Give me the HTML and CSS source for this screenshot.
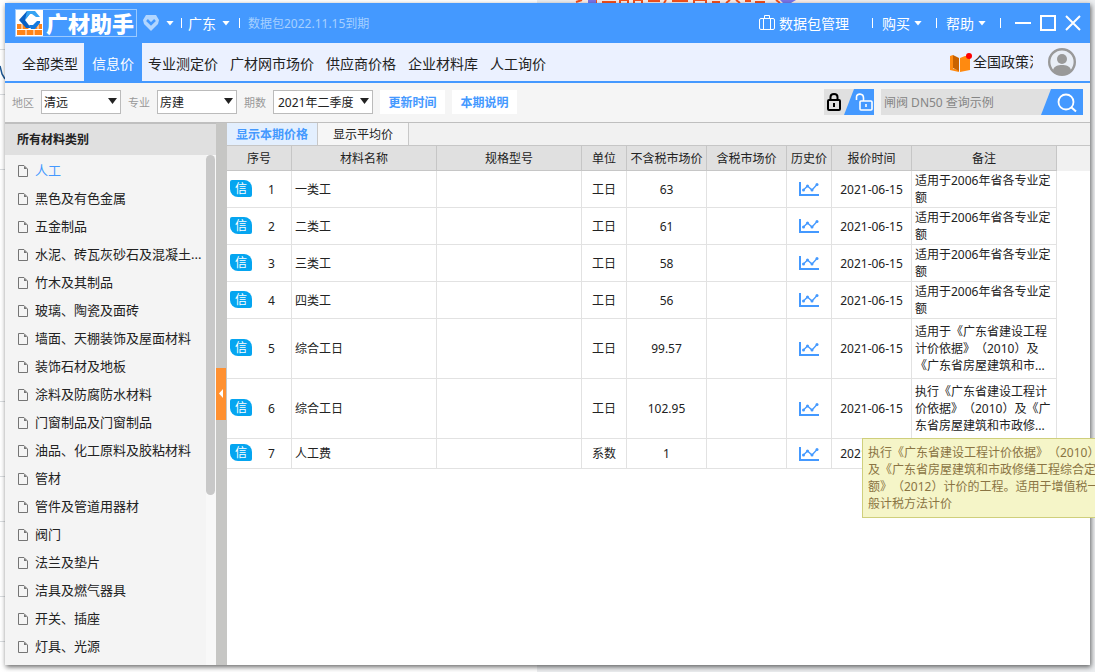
FILE: index.html
```html
<!DOCTYPE html>
<html lang="zh-CN">
<head>
<meta charset="utf-8">
<title>广材助手</title>
<link rel="stylesheet" href="styles.css">
</head>
<body>
<svg class="sprite" aria-hidden="true">
  <symbol id="doc" viewBox="0 0 10 12"><path d="M.5.5h5.500l3.500 3.500v7.500h-9z" fill="none" stroke="#757575"/><path d="M6 1v3h3z" fill="#757575"/></symbol>
  <symbol id="chart" viewBox="0 0 20 14"><path d="M1 0v13h19" fill="none" stroke="#4499ff" stroke-width="2"/><path d="M4.500 8l4-4 4.500 4 5-5.500" fill="none" stroke="#4499ff" stroke-width="1.300"/><g fill="#4499ff"><circle cx="4.500" cy="8" r="1.500"/><circle cx="8.500" cy="4" r="1.500"/><circle cx="13" cy="8" r="1.500"/><circle cx="18" cy="2.500" r="1.500"/></g></symbol>
</svg>
<svg class="backdrop" width="1095" height="672" aria-hidden="true">
  <path d="M570 0h250v3H570z" fill="#fbeee9"/>
  <path d="M576 2l6-2M596 3V0M602 2h14M620 3V0h8v3M634 3V0h8v3M648 1h12M664 3l2-3M672 1h16M694 3V0h12v3M712 2h8M726 3l4-3M736 0l4 3M745 1h6M755 2h10M776 0l4 3" stroke="#f4511e" stroke-width="2" fill="none"/>
  <path d="M588 0h8v3h-8zM780 0h16l-5 3h-8z" fill="#7b74e8"/>
  <path d="M0 49.500h5M0 94.500h5M0 169.500h5M0 401.500h5M0 476.500h5M0 521.500h5M0 596.500h5M0 641.500h5" stroke="#d9dcdf"/>
  <path d="M0 66l2 8 3 5" stroke="#1d5795" stroke-width="1.500" fill="none"/>
</svg>
<div class="window">
  <header class="titlebar">
    <div class="brand">
      <svg width="28" height="28" viewBox="0 0 28 28"><path fill="#fff" d="M0 0h28v28H0z"/><path d="M2 15h7l5 5h5l3-5h5v11H2z" fill="#ff8418"/><path d="M2 20.500h25M7 15v5M11 21v5M19 21v5M23 15v5" stroke="#fff" fill="none"/><path d="M4 11L12 2h5l-7 9 6 8h-5z" fill="#0a5fc4"/><path d="M12 2h8l5 6h-4l-4-3h-2l-5 6z" fill="#35a3f3"/><path d="M14 16h4l4-4h3v2l-5 6h-4z" fill="#1279df"/></svg>
      <span class="brand-name">广材助手</span>
    </div>
    <button class="bare badge-menu" aria-label="会员">
      <svg width="16" height="16" viewBox="0 0 16 16"><path d="M3 0h10l3 5-1 4-7 7-7-7-1-4z" fill="#b2d6ff"/><path d="M4 5l4 4 4-4" stroke="#4499ff" stroke-width="2.500" fill="none"/></svg>
      <i class="caret"></i>
    </button>
    <i class="sep"></i>
    <button class="bare region">广东<i class="caret"></i></button>
    <i class="sep"></i>
    <span class="expiry">数据包2022.11.15到期</span>
    <div class="title-right">
      <button class="bare package"><svg width="16" height="16" viewBox="0 0 16 16" fill="none" stroke="#fff"><rect x=".5" y="3.500" width="15" height="11" rx="1.500"/><path d="M5.500 3V.5h5V3M4.500 4v10M11.500 4v10"/></svg>数据包管理</button>
      <i class="sep"></i>
      <button class="bare drop">购买<i class="caret"></i></button>
      <i class="sep"></i>
      <button class="bare drop">帮助<i class="caret"></i></button>
      <i class="sep"></i>
      <div class="controls">
        <button class="bare" aria-label="最小化"><svg width="16" height="16"><path d="M0 8h16" stroke="#fff" stroke-width="2"/></svg></button>
        <button class="bare" aria-label="最大化"><svg width="16" height="16"><path d="M1 1h14v14H1z" stroke="#fff" stroke-width="2" fill="none"/></svg></button>
        <button class="bare" aria-label="关闭"><svg width="16" height="16"><path d="M1 1l14 14M15 1L1 15" stroke="#fff" stroke-width="2"/></svg></button>
      </div>
    </div>
  </header>

  <nav class="mainnav">
    <a href="#all">全部类型</a>
    <a href="#info" class="active" aria-current="page">信息价</a>
    <a href="#pro">专业测定价</a>
    <a href="#market">广材网市场价</a>
    <a href="#supplier">供应商价格</a>
    <a href="#company">企业材料库</a>
    <a href="#labour">人工询价</a>
    <div class="nav-right">
      <a class="policy" href="#policy">
        <svg width="24" height="21" viewBox="0 0 24 21"><path d="M1 4l3-1v15l-3-1z" fill="#ff8a10"/><path d="M1 16l9 2v2l-9-2z" fill="#ff8a10"/><path d="M4 3l6 3v13l-6-3z" fill="#c96200"/><path d="M11 6l5-2h5v14l-5 1-5 1z" fill="#ff8a10"/><circle cx="20" cy="4" r="3" fill="#f00"/></svg>
        <span class="policy-text">全国政策法规</span>
      </a>
      <button class="bare avatar" aria-label="用户"><svg width="28" height="28" viewBox="0 0 28 28"><circle cx="14" cy="14" r="12.800" fill="#e9eef6" stroke="#999" stroke-width="2.400"/><circle cx="14" cy="11" r="5" fill="#999"/><path d="M5 22c1-4 5-5 9-5s8 1 9 5c-2 3-5 4.500-9 4.500S7 25 5 22z" fill="#999"/></svg></button>
    </div>
  </nav>

  <form class="filters">
    <label for="area">地区</label>
    <span class="pick"><select id="area"><option>清远</option></select></span>
    <label for="major">专业</label>
    <span class="pick"><select id="major"><option>房建</option></select></span>
    <label for="period">期数</label>
    <span class="pick wide"><select id="period"><option>2021年二季度</option></select></span>
    <button type="button" class="flat">更新时间</button>
    <button type="button" class="flat">本期说明</button>
    <div class="search-side">
      <button type="button" class="bare lock" aria-label="锁定"><svg width="50" height="26" viewBox="0 0 50 26"><path d="M0 0h50v26H0z" fill="#e0e0e0"/><path d="M30 0h20v26H20z" fill="#4499ff"/><g fill="none" stroke="#000" stroke-width="2"><rect x="4" y="11" width="12" height="10" rx="1"/><path d="M6.500 11V8c0-4 7-4 7 0v3"/></g><path d="M10 14v4" stroke="#000" stroke-width="2"/><g fill="none" stroke="#fff" stroke-width="1.600"><rect x="36" y="12" width="12" height="9" rx="1"/><path d="M39.500 12V9c0-5-7-5-7-1v3"/><path d="M42 15v3"/></g></svg></button>
      <div class="search">
        <input type="search" aria-label="查询" placeholder="闸阀 DN50 查询示例">
        <button type="button" class="bare" aria-label="搜索"><svg width="42" height="26" viewBox="0 0 42 26"><path d="M10 0h32v26H0z" fill="#4499ff"/><circle cx="25" cy="13" r="7.500" fill="none" stroke="#fff" stroke-width="1.800"/><path d="M30 18l5 4.500" stroke="#fff" stroke-width="2"/></svg></button>
      </div>
    </div>
  </form>

  <div class="main">
    <aside class="sidebar">
      <h2>所有材料类别</h2>
      <div class="tree">
        <ul>
          <li><a href="#c1" class="current"><svg><use href="#doc"/></svg><span>人工</span></a></li>
          <li><a href="#c2"><svg><use href="#doc"/></svg><span>黑色及有色金属</span></a></li>
          <li><a href="#c3"><svg><use href="#doc"/></svg><span>五金制品</span></a></li>
          <li><a href="#c4"><svg><use href="#doc"/></svg><span>水泥、砖瓦灰砂石及混凝土...</span></a></li>
          <li><a href="#c5"><svg><use href="#doc"/></svg><span>竹木及其制品</span></a></li>
          <li><a href="#c6"><svg><use href="#doc"/></svg><span>玻璃、陶瓷及面砖</span></a></li>
          <li><a href="#c7"><svg><use href="#doc"/></svg><span>墙面、天棚装饰及屋面材料</span></a></li>
          <li><a href="#c8"><svg><use href="#doc"/></svg><span>装饰石材及地板</span></a></li>
          <li><a href="#c9"><svg><use href="#doc"/></svg><span>涂料及防腐防水材料</span></a></li>
          <li><a href="#c10"><svg><use href="#doc"/></svg><span>门窗制品及门窗制品</span></a></li>
          <li><a href="#c11"><svg><use href="#doc"/></svg><span>油品、化工原料及胶粘材料</span></a></li>
          <li><a href="#c12"><svg><use href="#doc"/></svg><span>管材</span></a></li>
          <li><a href="#c13"><svg><use href="#doc"/></svg><span>管件及管道用器材</span></a></li>
          <li><a href="#c14"><svg><use href="#doc"/></svg><span>阀门</span></a></li>
          <li><a href="#c15"><svg><use href="#doc"/></svg><span>法兰及垫片</span></a></li>
          <li><a href="#c16"><svg><use href="#doc"/></svg><span>洁具及燃气器具</span></a></li>
          <li><a href="#c17"><svg><use href="#doc"/></svg><span>开关、插座</span></a></li>
          <li><a href="#c18"><svg><use href="#doc"/></svg><span>灯具、光源</span></a></li>
        </ul>
        <div class="track"><div class="thumb"></div></div>
      </div>
    </aside>
    <div class="splitter"><button class="bare" aria-label="收起"><svg width="10" height="52"><path d="M7 21v9l-4-4.500z" fill="#fff"/></svg></button></div>

    <section class="content">
      <div class="subtabs">
        <button class="on">显示本期价格</button>
        <button>显示平均价</button>
      </div>
      <table>
        <colgroup><col class="w65"><col class="w145"><col class="w145"><col class="w45"><col class="w80"><col class="w80"><col class="w45"><col class="w80"><col class="w145"><col></colgroup>
        <thead><tr><th>序号</th><th>材料名称</th><th>规格型号</th><th>单位</th><th>不含税市场价</th><th>含税市场价</th><th>历史价</th><th>报价时间</th><th>备注</th><td class="rest"></td></tr></thead>
        <tbody>
          <tr><td class="no"><div><b>信</b><span>1</span></div></td><td class="name">一类工</td><td></td><td>工日</td><td>63</td><td></td><td><button class="bare" aria-label="历史价"><svg class="chart"><use href="#chart"/></svg></button></td><td>2021-06-15</td><td class="note">适用于2006年省各专业定额</td></tr>
          <tr><td class="no"><div><b>信</b><span>2</span></div></td><td class="name">二类工</td><td></td><td>工日</td><td>61</td><td></td><td><button class="bare" aria-label="历史价"><svg class="chart"><use href="#chart"/></svg></button></td><td>2021-06-15</td><td class="note">适用于2006年省各专业定额</td></tr>
          <tr><td class="no"><div><b>信</b><span>3</span></div></td><td class="name">三类工</td><td></td><td>工日</td><td>58</td><td></td><td><button class="bare" aria-label="历史价"><svg class="chart"><use href="#chart"/></svg></button></td><td>2021-06-15</td><td class="note">适用于2006年省各专业定额</td></tr>
          <tr><td class="no"><div><b>信</b><span>4</span></div></td><td class="name">四类工</td><td></td><td>工日</td><td>56</td><td></td><td><button class="bare" aria-label="历史价"><svg class="chart"><use href="#chart"/></svg></button></td><td>2021-06-15</td><td class="note">适用于2006年省各专业定额</td></tr>
          <tr class="tall"><td class="no"><div><b>信</b><span>5</span></div></td><td class="name">综合工日</td><td></td><td>工日</td><td>99.57</td><td></td><td><button class="bare" aria-label="历史价"><svg class="chart"><use href="#chart"/></svg></button></td><td>2021-06-15</td><td class="note">适用于《广东省建设工程计价依据》（2010）及《广东省房屋建筑和市...</td></tr>
          <tr class="tall"><td class="no"><div><b>信</b><span>6</span></div></td><td class="name">综合工日</td><td></td><td>工日</td><td>102.95</td><td></td><td><button class="bare" aria-label="历史价"><svg class="chart"><use href="#chart"/></svg></button></td><td>2021-06-15</td><td class="note">执行《广东省建设工程计价依据》（2010）及《广东省房屋建筑和市政修...<div class="tip" role="tooltip">执行《广东省建设工程计价依据》（2010）<br>及《广东省房屋建筑和市政修缮工程综合定<br>额》（2012）计价的工程。适用于增值税一<br>般计税方法计价</div></td></tr>
          <tr class="short"><td class="no"><div><b>信</b><span>7</span></div></td><td class="name">人工费</td><td></td><td>系数</td><td>1</td><td></td><td><button class="bare" aria-label="历史价"><svg class="chart"><use href="#chart"/></svg></button></td><td>2021-06-15</td><td class="note"></td></tr>
        </tbody>
      </table>
    </section>
  </div>
</div>
</body>
</html>
```
FILE: styles.css
```css
* { box-sizing: border-box; }
body {
  margin: 0;
  min-height: 100vh;
  display: flex;
  padding: 3px 5px 7px;
  overflow-x: clip;
  background: linear-gradient(90deg, #fff 537px, #eceef0 537px);
  font: 12px/17px "Noto Sans", "Noto Sans CJK SC", sans-serif;
  color: #222;
  text-spacing-trim: space-all;
}
button, input, select { font: inherit; color: inherit; }
a { color: inherit; text-decoration: none; }
svg { display: block; flex: none; }
.sprite { position: absolute; width: 0; height: 0; }
.backdrop { position: absolute; left: 0; top: 0; }
.bare {
  display: flex;
  align-items: center;
  padding: 0;
  border: 0;
  background: none;
}
.window {
  position: relative;
  flex: 1;
  min-width: 0;
  display: flex;
  flex-direction: column;
  background: #fff;
  box-shadow: 1px 2px 5px rgba(0, 0, 0, .6);
}

/* title bar */
.titlebar {
  display: flex;
  align-items: center;
  height: 40px;
  padding: 0 9px 0 10px;
  background: #4499ff;
  color: #fff;
  font-size: 14px;
}
.brand {
  display: flex;
  align-items: center;
  width: 122px;
  height: 28px;
  margin-right: 6px;
  outline: 1px solid #9bcaff;
  outline-offset: -1px;
}
.brand-name { margin-left: 3px; font-size: 22px; font-weight: 900; line-height: 26px; white-space: nowrap; }
.badge-menu { gap: 7px; margin-right: 7px; }
.caret {
  width: 8px;
  height: 5px;
  background: #fff;
  clip-path: polygon(0 0, 100% 0, 50% 100%);
}
.sep { width: 1px; height: 10px; background: #fff; }
.region { gap: 6px; margin: 0 9px 0 6px; }
.expiry { margin-left: 8px; font-size: 12px; color: #a6d0ff; }
.title-right { display: flex; align-items: center; margin-left: auto; }
.package { gap: 4px; margin-right: 23px; }
.drop { gap: 4px; margin: 0 14px 0 9px; }
.controls { display: flex; gap: 9px; margin-left: 14px; }

/* main navigation */
.mainnav {
  display: flex;
  height: 40px;
  padding: 0 14px 0 11px;
  border-bottom: 2px solid #4499ff;
  background: #ebf1ff;
  font-size: 14px;
  line-height: 38px;
}
.mainnav > a { padding: 2px 6px 0; white-space: nowrap; }
.mainnav > .active { padding: 2px 8px 0; background: #4499ff; color: #fff; }
.nav-right { display: flex; align-items: center; gap: 15px; margin-left: auto; }
.policy { display: flex; align-items: center; }
.policy-text { width: 60px; overflow: hidden; white-space: nowrap; }

/* filters */
.filters {
  display: flex;
  align-items: center;
  height: 40px;
  padding: 0 7px;
  border-bottom: 1px solid #bfbfbf;
  background: #f5f5f5;
}
.filters label { margin-right: 7px; font-size: 11px; color: #999; }
.pick { position: relative; width: 80px; margin-right: 7px; }
.pick select {
  appearance: none;
  display: block;
  width: 100%;
  height: 24px;
  padding: 0 2px;
  border: 1px solid #bbb;
  border-radius: 0;
  background: #fff;
}
.pick.wide { width: 100px; }
.pick.wide select { padding: 0 4px; }
.pick::after {
  content: "";
  position: absolute;
  right: 4px;
  top: 8px;
  width: 9px;
  height: 6px;
  background: #222;
  clip-path: polygon(0 0, 100% 0, 50% 100%);
  pointer-events: none;
}
.flat {
  height: 24px;
  width: 65px;
  margin-right: 7px;
  padding: 0;
  border: 0;
  background: #fff;
  color: #4499ff;
  font-weight: 600;
}
.search-side { display: flex; gap: 7px; margin-left: auto; }
.search { display: flex; width: 202px; background: #e0e0e0; }
.search input {
  flex: 1;
  min-width: 0;
  height: 26px;
  padding: 0 3px;
  border: 0;
  background: none;
  appearance: none;
}
.search input::placeholder { color: #858585; }
.filters > * { margin-bottom: 1px; }

/* sidebar */
.main { flex: 1; display: flex; }
.sidebar { width: 211px; display: flex; flex-direction: column; background: #f4f4f4; }
.sidebar h2 {
  margin: 0;
  height: 32px;
  padding: 0 12px;
  border-top: 1px solid #bfbfbf;
  background: #e0e0e0;
  font-size: 12px;
  font-weight: 600;
  line-height: 31px;
}
.tree { flex: 1; display: flex; }
.tree ul { flex: 1; min-width: 0; margin: 0; padding: 1px 0 0; list-style: none; }
.tree a {
  display: flex;
  align-items: center;
  gap: 7px;
  height: 28px;
  padding-left: 13px;
  font-size: 13px;
  white-space: nowrap;
}
.tree svg { width: 10px; height: 12px; margin-top: 2px; }
.tree .current { color: #4499ff; }
.track { width: 10px; background: #f8f8f8; }
.thumb { width: 9px; height: 340px; border-radius: 5px; background: #c8c8c8; }
.splitter { display: flex; align-items: center; width: 11px; background: #c6c6c4; }
.splitter button { background: #ff9030; }

/* price table */
.content { flex: 1; min-width: 0; }
.subtabs { display: flex; height: 22px; background: #f1f1f1; }
.subtabs button {
  width: 91px;
  padding: 0;
  border: 0;
  border-right: 1px solid #c8c8c8;
  background: #f6f6f6;
}
.subtabs .on { background: #e3effe; color: #4499ff; font-weight: 600; }
table { width: 100%; table-layout: fixed; border-collapse: separate; border-spacing: 0; }
.w45 { width: 45px; }
.w65 { width: 65px; }
.w80 { width: 80px; }
.w145 { width: 145px; }
th {
  height: 26px;
  padding: 0;
  border: solid #c6c6c6;
  border-width: 1px 1px 1px 0;
  background: #e0e0e0;
  font-weight: 400;
  white-space: nowrap;
}
thead .rest { border: 0; border-top: 1px solid #c6c6c6; background: #f1f1f1; }
td {
  height: 37px;
  padding: 0;
  border: solid #e2e2e2;
  border-width: 0 1px 1px 0;
  text-align: center;
}
thead td { height: 26px; }
.tall td { height: 60px; }
.short td { height: 30px; }
td.name { padding-left: 3px; text-align: left; }
td.note { position: relative; padding: 0 2px 0 3px; text-align: left; }
.no div { display: flex; align-items: center; padding-left: 3px; }
.no span { flex: 1; }
.no b {
  width: 22px;
  height: 17px;
  margin-bottom: 2px;
  border-radius: 2px 8px 2px 8px;
  background: #05a5f0;
  color: #fff;
  font-weight: 400;
  line-height: 17px;
}
td .bare { margin: 0 auto; }
.chart { width: 20px; height: 14px; }
.tip {
  position: absolute;
  z-index: 1;
  left: -50px;
  top: 59px;
  padding: 5px;
  border: 1px solid #cfcf7c;
  background: #f5f5c8;
  color: #8a7443;
  white-space: nowrap;
}
```
